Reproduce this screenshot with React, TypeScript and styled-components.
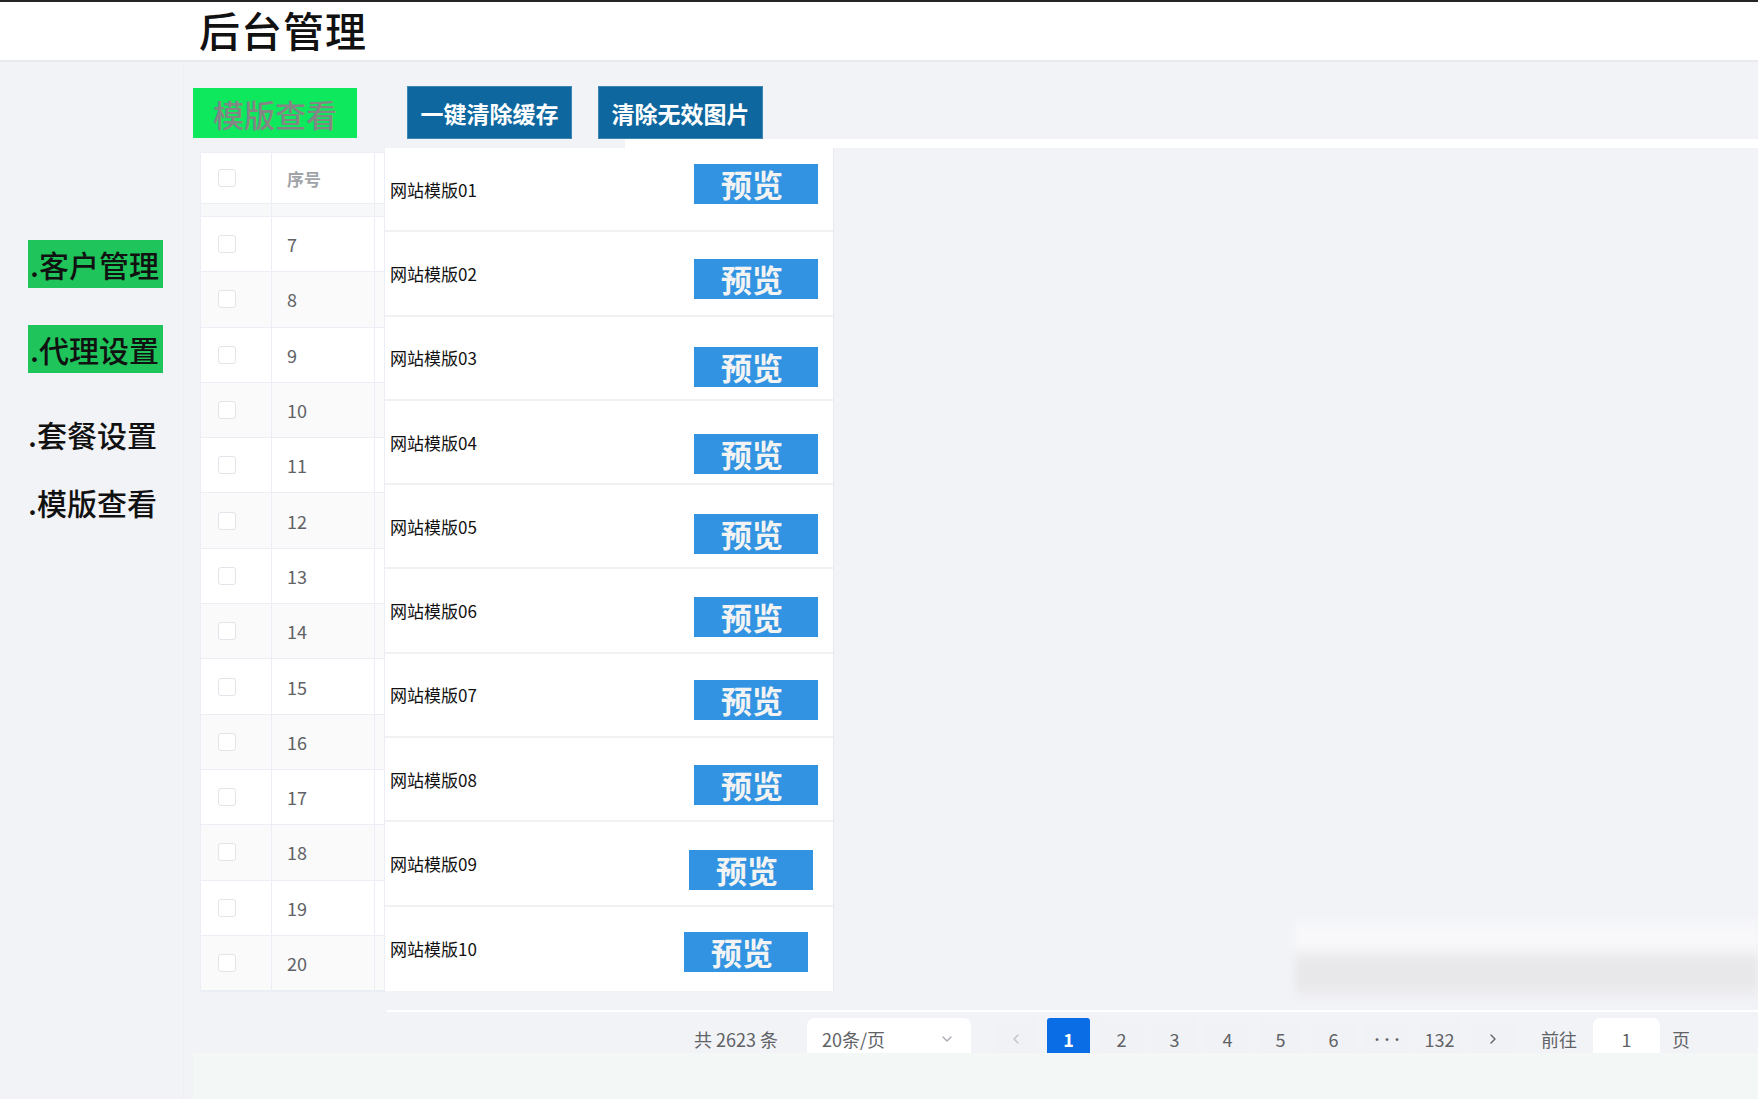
import styled, { createGlobalStyle } from "styled-components";
import { ChevronDown, ChevronLeft, ChevronRight } from "lucide-react";

const GlobalStyle = createGlobalStyle`
  html, body {
    margin: 0;
    padding: 0;
  }
  body {
    background: #f2f3f7;
    font-family: "Noto Sans CJK SC", "Noto Sans", sans-serif;
  }
`;

/* Row numbers in the frozen left table and the templates in the card.
   The preview buttons are not perfectly aligned in the original, so each
   row carries its own offsets. */
const rowNumbers = [7, 8, 9, 10, 11, 12, 13, 14, 15, 16, 17, 18, 19, 20];

const templates = [
  { name: "网站模版01", top: 16, right: 15 },
  { name: "网站模版02", top: 27, right: 15 },
  { name: "网站模版03", top: 30, right: 15 },
  { name: "网站模版04", top: 33, right: 15 },
  { name: "网站模版05", top: 29, right: 15 },
  { name: "网站模版06", top: 28, right: 15 },
  { name: "网站模版07", top: 26, right: 15 },
  { name: "网站模版08", top: 27, right: 15 },
  { name: "网站模版09", top: 28, right: 20 },
  { name: "网站模版10", top: 25, right: 25 },
];

const pages = ["1", "2", "3", "4", "5", "6", "•••", "132"];

const navItems = [
  { label: ".客户管理", active: true },
  { label: ".代理设置", active: true },
  { label: ".套餐设置", active: false },
  { label: ".模版查看", active: false },
];

const Page = styled.div`
  width: 1758px;
  height: 1099px;
  overflow: hidden;
  display: flex;
  flex-direction: column;
`;

const TopLine = styled.div`
  height: 2px;
  background: #252525;
`;

const Header = styled.header`
  height: 60px;
  box-sizing: border-box;
  background: #ffffff;
  border-bottom: 2px solid #e9eaef;
  display: flex;
  align-items: flex-start;
  padding-left: 199px;
`;

const Title = styled.h1`
  margin: -2px 0 0;
  font-size: 41px;
  line-height: 1.45;
  font-weight: 500;
  color: #111111;
  letter-spacing: 1px;
`;

const Body = styled.div`
  flex: 1;
  display: flex;
  min-height: 0;
`;

const Sidebar = styled.nav`
  width: 184px;
  box-sizing: border-box;
  border-right: 1px solid #eceef2;
  padding: 178px 0 0 28px;
`;

const NavItem = styled.div<{ $active: boolean }>`
  width: 135px;
  height: 48px;
  box-sizing: border-box;
  padding-left: ${(p) => (p.$active ? 2 : 0)}px;
  margin-bottom: ${(p) => (p.$active ? 37 : 20)}px;
  background: ${(p) => (p.$active ? "#1fc55b" : "transparent")};
  color: #111111;
  font-size: 30px;
  font-weight: 500;
  line-height: 48px;
  white-space: nowrap;
`;

const Main = styled.main`
  flex: 1;
  min-width: 0;
  display: flex;
  flex-direction: column;
  padding-left: 9px;
`;

const Toolbar = styled.div`
  display: flex;
  align-items: flex-start;
  margin-top: 24px;
  height: 53px;
`;

const TabLabel = styled.div`
  width: 164px;
  height: 50px;
  margin-top: 2px;
  background: #0de85c;
  color: #858585;
  font-size: 31px;
  font-weight: 500;
  display: flex;
  align-items: center;
  justify-content: center;
`;

const ActionButton = styled.button<{ $gap: number }>`
  width: 165px;
  height: 53px;
  box-sizing: border-box;
  margin-left: ${(p) => p.$gap}px;
  padding: 0;
  background: #0e679f;
  border: 1px solid #3d86b4;
  color: #ffffff;
  font-family: inherit;
  font-size: 23px;
  font-weight: 700;
  cursor: pointer;
`;

const TopStrip = styled.div`
  height: 9px;
  margin-left: 432px;
  background: #ffffff;
`;

const TableRow = styled.div`
  display: flex;
  height: 843px;
`;

const FixedTable = styled.div`
  width: 185px;
  margin: 4px 0 0 7px;
  box-sizing: border-box;
  border: 1px solid #ebeef5;
  background: #ffffff;
  align-self: flex-start;
`;

const GridRow = styled.div<{ $height: number; $striped?: boolean }>`
  display: grid;
  grid-template-columns: 71px 103px 1fr;
  height: ${(p) => p.$height}px;
  box-sizing: border-box;
  border-bottom: 1px solid #ebeef5;
  background: ${(p) => (p.$striped ? "#fafafa" : "#ffffff")};
`;

const GapRow = styled.div`
  display: grid;
  grid-template-columns: 71px 103px 1fr;
  height: 13px;
  box-sizing: border-box;
  border-bottom: 1px solid #ebeef5;
  background: #f7f8f9;
`;

const Cell = styled.div<{ $pad?: number }>`
  display: flex;
  align-items: center;
  padding-left: ${(p) => p.$pad ?? 15}px;
  border-right: 1px solid #ebeef5;
  font-size: 18px;
  color: #606266;
`;

const HeadCell = styled(Cell)`
  color: #a0a3a8;
  font-weight: 700;
  font-size: 17px;
`;

const Checkbox = styled.span`
  width: 18px;
  height: 18px;
  box-sizing: border-box;
  border: 1px solid #e2e4e9;
  border-radius: 3px;
  background: #ffffff;
`;

const TemplateCard = styled.div`
  width: 449px;
  height: 843px;
  box-sizing: border-box;
  background: #ffffff;
  border-right: 1px solid #e9eaee;
`;

const TemplateItem = styled.div`
  height: 84.3px;
  box-sizing: border-box;
  display: flex;
  align-items: flex-start;
  padding-left: 5px;
  border-bottom: 2px solid #f0f1f3;

  &:last-child {
    border-bottom: none;
  }
`;

const TemplateName = styled.span`
  align-self: center;
  font-size: 17px;
  color: #111111;
`;

const PreviewButton = styled.button<{ $top: number; $right: number }>`
  width: 124px;
  height: 40px;
  margin: ${(p) => p.$top}px ${(p) => p.$right}px 0 auto;
  padding: 0 8px 0 0;
  border: none;
  background: #3193e1;
  color: #f3f3f3;
  font-family: inherit;
  font-size: 31px;
  font-weight: 700;
  line-height: 40px;
  cursor: pointer;
`;

const GhostColumn = styled.div`
  flex: 1;
  display: flex;
  flex-direction: column;
  justify-content: flex-end;
  padding-left: 461px;
`;

const GhostBar = styled.div`
  height: 86px;
  margin-bottom: -9px;
  background: linear-gradient(
    to bottom,
    #f2f3f7 0%,
    #f8f8fb 20%,
    #f9f9fb 34%,
    #e9e9ec 55%,
    #e8e8eb 80%,
    #f0f1f4 100%
  );
  filter: blur(3px);
`;

const Divider = styled.div`
  height: 2px;
  margin: 19px 0 0 194px;
  background: #ffffff;
`;

const Pagination = styled.div`
  height: 41px;
  overflow: hidden;
  display: flex;
  align-items: flex-start;
  padding: 6px 0 0 501px;
  box-sizing: border-box;
  font-size: 18px;
  color: #606266;
`;

const Total = styled.span`
  width: 91px;
  height: 42px;
  line-height: 42px;
  white-space: nowrap;
`;

const SizeSelect = styled.div`
  width: 164px;
  height: 42px;
  margin-left: 22px;
  box-sizing: border-box;
  padding: 0 16px 0 15px;
  background: #ffffff;
  border-radius: 7px;
  display: flex;
  align-items: center;
  justify-content: space-between;
  color: #606266;
`;

const PagerButton = styled.span<{ $active?: boolean; $disabled?: boolean; $gap?: number }>`
  width: 43px;
  height: 42px;
  margin-left: ${(p) => p.$gap ?? 10}px;
  border-radius: 3px;
  background: ${(p) => (p.$active ? "#0b6de6" : "#f0f2f5")};
  color: ${(p) => (p.$active ? "#ffffff" : p.$disabled ? "#c0c4cc" : "#606266")};
  display: flex;
  align-items: center;
  justify-content: center;
  font-size: 18px;
  font-weight: ${(p) => (p.$active ? 700 : 400)};
`;

const Ellipsis = styled.span`
  font-size: 11px;
  letter-spacing: -1px;
  font-weight: 700;
`;

const GotoText = styled.span<{ $gap: number }>`
  margin-left: ${(p) => p.$gap}px;
  height: 42px;
  line-height: 42px;
`;

const GotoInput = styled.div`
  width: 67px;
  height: 42px;
  margin-left: 16px;
  background: #ffffff;
  border-radius: 7px;
  display: flex;
  align-items: center;
  justify-content: center;
`;

const Footer = styled.div`
  flex: 1;
  background: #f3f7f6;
`;

export default function App() {
  return (
    <>
      <GlobalStyle />
      <Page>
        <TopLine />
        <Header>
          <Title>后台管理</Title>
        </Header>
        <Body>
          <Sidebar>
            {navItems.map((item) => (
              <NavItem key={item.label} $active={item.active}>
                {item.label}
              </NavItem>
            ))}
          </Sidebar>
          <Main>
            <Toolbar>
              <TabLabel>模版查看</TabLabel>
              <ActionButton $gap={50}>一键清除缓存</ActionButton>
              <ActionButton $gap={26}>清除无效图片</ActionButton>
            </Toolbar>
            <TopStrip />
            <TableRow>
              <FixedTable>
                <GridRow $height={51}>
                  <HeadCell $pad={17}>
                    <Checkbox />
                  </HeadCell>
                  <HeadCell>序号</HeadCell>
                  <HeadCell />
                </GridRow>
                <GapRow>
                  <Cell />
                  <Cell />
                  <Cell />
                </GapRow>
                {rowNumbers.map((n, i) => (
                  <GridRow key={n} $height={55.3} $striped={i % 2 === 1}>
                    <Cell $pad={17}>
                      <Checkbox />
                    </Cell>
                    <Cell>{n}</Cell>
                    <Cell />
                  </GridRow>
                ))}
              </FixedTable>
              <TemplateCard>
                {templates.map((t) => (
                  <TemplateItem key={t.name}>
                    <TemplateName>{t.name}</TemplateName>
                    <PreviewButton $top={t.top} $right={t.right}>
                      预览
                    </PreviewButton>
                  </TemplateItem>
                ))}
              </TemplateCard>
              <GhostColumn>
                <GhostBar />
              </GhostColumn>
            </TableRow>
            <Divider />
            <Pagination>
              <Total>共 2623 条</Total>
              <SizeSelect>
                <span>20条/页</span>
                <ChevronDown size={16} color="#a8abb2" />
              </SizeSelect>
              <PagerButton $disabled $gap={23}>
                <ChevronLeft size={16} />
              </PagerButton>
              {pages.map((p) => (
                <PagerButton key={p} $active={p === "1"}>
                  {p === "•••" ? <Ellipsis>•••</Ellipsis> : p}
                </PagerButton>
              ))}
              <PagerButton>
                <ChevronRight size={16} />
              </PagerButton>
              <GotoText $gap={27}>前往</GotoText>
              <GotoInput>1</GotoInput>
              <GotoText $gap={12}>页</GotoText>
            </Pagination>
            <Footer />
          </Main>
        </Body>
      </Page>
    </>
  );
}
